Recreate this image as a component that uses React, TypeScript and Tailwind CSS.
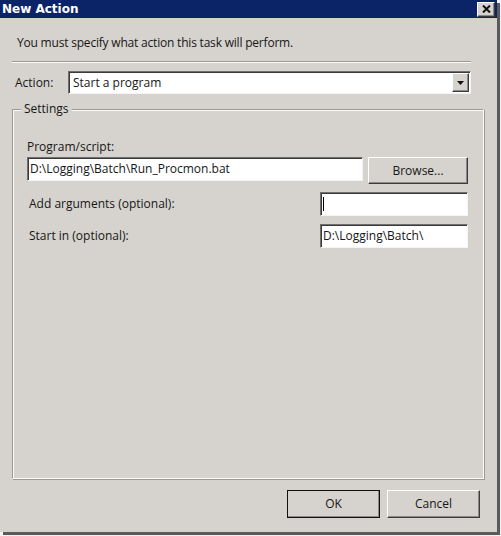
import React from 'react'

const sunken =
  'border border-t-[#6f6f6f] border-l-[#6f6f6f] border-b-[#f4f4f4] border-r-[#f4f4f4] bg-white shadow-[inset_1px_1px_0_#3a3a3a]'

const raised =
  'border border-t-[#ffffff] border-l-[#ffffff] border-b-[#3c3c3c] border-r-[#3c3c3c] bg-[#d6d3ce] shadow-[inset_-1px_-1px_0_#8a8a8a]'

const font = { fontFamily: '"Open Sans", "Liberation Sans", sans-serif' }

export default function App() {
  return (
    <div className="w-[501px] h-[536px] bg-[#f2f2f2] text-[12px] text-[#161616]" style={font}>
      <div className="w-[497px] h-[532px] flex flex-col bg-[#d6d3ce] shadow-[3px_3px_0_#5a5a5a]">
        {/* Title bar */}
        <div className="h-[18px] bg-[#0b2467] flex items-center justify-between pl-[2px] pr-[2px]">
          <span
            className="text-white font-bold text-[12px] leading-none"
            style={{ fontFamily: '"DejaVu Sans", "Liberation Sans", sans-serif' }}
          >
            New Action
          </span>
          <div className={`w-[18px] h-[15px] flex items-center justify-center ${raised}`}>
            <svg width="9" height="8" viewBox="0 0 9 8">
              <path d="M1 0.5 L8 7.5 M8 0.5 L1 7.5" stroke="#111" strokeWidth="2" />
            </svg>
          </div>
        </div>

        {/* Body */}
        <div className="flex-1 flex flex-col px-[12px]">
          <p className="mt-[16px] ml-[5px] leading-[17px] tracking-[-0.2px]">
            You must specify what action this task will perform.
          </p>
          <div className="mt-[10px] mr-[14px] h-[2px] border-t border-t-[#9a9894] border-b border-b-[#fbfbfb]" />

          {/* Action row */}
          <div className="mt-[8px] flex items-center">
            <span className="ml-[3px] w-[53px]">Action:</span>
            <div className={`w-[403px] h-[23px] flex items-center justify-between pl-[4px] pr-[1px] ${sunken}`}>
              <span>Start a program</span>
              <div className={`w-[17px] h-[19px] flex items-center justify-center ${raised}`}>
                <svg width="7" height="4" viewBox="0 0 7 4">
                  <path d="M0 0 H7 L3.5 4 Z" fill="#111" />
                </svg>
              </div>
            </div>
          </div>

          {/* Settings group */}
          <div className="relative mt-[15px] mr-[1px] h-[370px] border border-t-[#9a9894] border-l-[#9a9894] border-r-[#fbfbfb] border-b-[#fbfbfb] shadow-[inset_1px_1px_0_#fbfbfb,1px_1px_0_#9a9894]">
            <span className="absolute -top-[9px] left-[8px] px-[3px] bg-[#d6d3ce] leading-[16px]">Settings</span>
            <div className="flex flex-col pl-[14px] pr-[15px]">
              <span className="mt-[28px] leading-[17px]">Program/script:</span>
              <div className="mt-[2px] flex items-start justify-between">
                <div className={`w-[336px] h-[24px] flex items-center pl-[2px] ${sunken}`}>
                  D:\Logging\Batch\Run_Procmon.bat
                </div>
                <div className={`w-[100px] h-[27px] flex items-center justify-center ${raised}`}>Browse...</div>
              </div>
              <div className="mt-[8px] flex items-center justify-between">
                <span className="ml-[2px]">Add arguments (optional):</span>
                <div className={`w-[148px] h-[24px] flex items-center pl-[2px] ${sunken}`}>
                  <span className="w-[1px] h-[14px] bg-black" />
                </div>
              </div>
              <div className="mt-[8px] flex items-center justify-between">
                <span className="ml-[2px]">Start in (optional):</span>
                <div className={`w-[148px] h-[24px] flex items-center pl-[2px] ${sunken}`}>D:\Logging\Batch\</div>
              </div>
            </div>
          </div>

          {/* Buttons */}
          <div className="mt-[11px] mr-[5px] flex justify-end gap-[7px]">
            <div className={`w-[93px] h-[28px] flex items-center justify-center outline outline-1 outline-[#111] -outline-offset-1 ${raised}`}>
              OK
            </div>
            <div className={`w-[93px] h-[28px] flex items-center justify-center ${raised}`}>Cancel</div>
          </div>
        </div>
      </div>
    </div>
  )
}
